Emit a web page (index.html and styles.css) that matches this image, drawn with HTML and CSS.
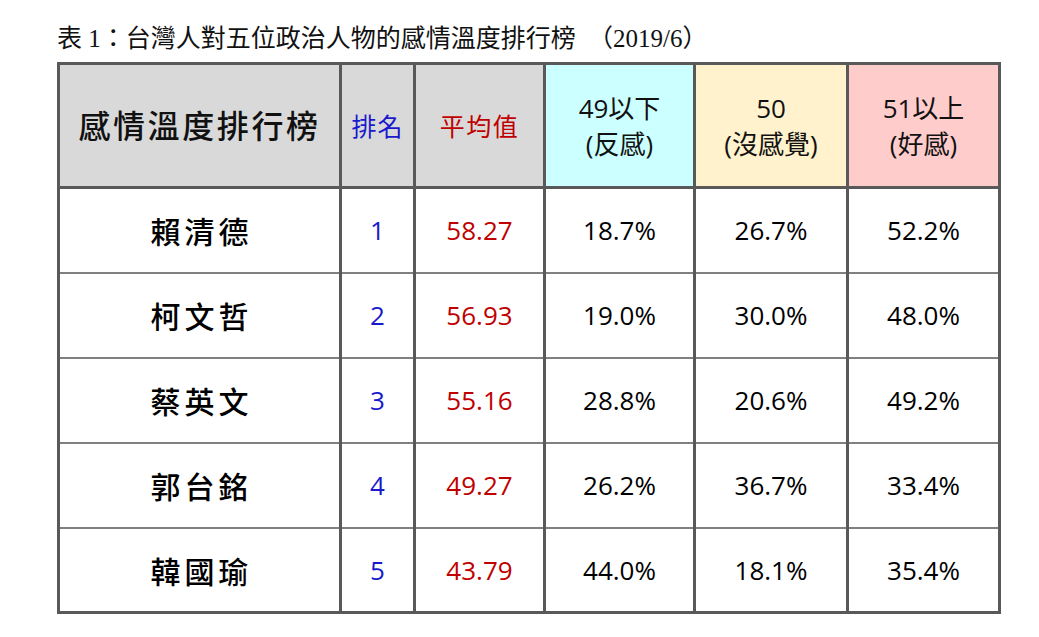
FILE: index.html
```html
<!DOCTYPE html>
<html lang="zh-Hant">
<head>
<meta charset="utf-8">
<title>表1</title>
<link rel="stylesheet" href="styles.css">
</head>
<body>
<div class="page">
  <div class="caption"><span class="lat">表</span> <span class="lat">1</span>：台灣人對五位政治人物的感情溫度排行榜 <span class="paren">（<span class="lat">2019/6</span>）</span></div>
  <table class="rank">
    <colgroup>
      <col class="c1"><col class="c2"><col class="c3"><col class="c4"><col class="c5"><col class="c6">
    </colgroup>
    <thead>
      <tr>
        <th class="h-gray h-title">感情溫度排行榜</th>
        <th class="h-gray h-rank">排名</th>
        <th class="h-gray h-avg">平均值</th>
        <th class="h-cyan">49以下<br>(反感)</th>
        <th class="h-yellow">50<br>(沒感覺)</th>
        <th class="h-pink">51以上<br>(好感)</th>
      </tr>
    </thead>
    <tbody>
      <tr><td class="name">賴清德</td><td class="rk">1</td><td class="avg">58.27</td><td>18.7%</td><td>26.7%</td><td>52.2%</td></tr>
      <tr><td class="name">柯文哲</td><td class="rk">2</td><td class="avg">56.93</td><td>19.0%</td><td>30.0%</td><td>48.0%</td></tr>
      <tr><td class="name">蔡英文</td><td class="rk">3</td><td class="avg">55.16</td><td>28.8%</td><td>20.6%</td><td>49.2%</td></tr>
      <tr><td class="name">郭台銘</td><td class="rk">4</td><td class="avg">49.27</td><td>26.2%</td><td>36.7%</td><td>33.4%</td></tr>
      <tr><td class="name">韓國瑜</td><td class="rk">5</td><td class="avg">43.79</td><td>44.0%</td><td>18.1%</td><td>35.4%</td></tr>
    </tbody>
  </table>
</div>
</body>
</html>
```

FILE: styles.css
```css
html, body {
  margin: 0;
  padding: 0;
  background: #ffffff;
}

.page {
  padding: 23px 0 0 57px;
}

.caption {
  font-family: "Liberation Serif", "Noto Sans CJK TC", serif;
  font-size: 25px;
  line-height: 32px;
  height: 39px;
  color: #111;
  white-space: nowrap;
}

.caption .lat {
  font-family: "Liberation Serif", "Noto Sans CJK TC", serif;
}

.caption .paren {
  margin-left: 6px;
}

.rank {
  border-collapse: collapse;
  table-layout: fixed;
  width: 944px;
  border: 3px solid #595959;
  font-family: "Open Sans", "Noto Sans CJK TC", sans-serif;
  color: #000;
}

.c1 { width: 282px; }
.c2 { width: 74px; }
.c3 { width: 130px; }
.c4 { width: 150px; }
.c5 { width: 153px; }
.c6 { width: 152px; }

.rank th,
.rank td {
  border-left: 3px solid #595959;
  border-right: 3px solid #595959;
  padding: 0;
  text-align: center;
  vertical-align: middle;
}

.rank thead tr {
  height: 124px;
}

.rank th {
  border-bottom: 3px solid #595959;
  font-weight: 400;
  font-size: 26px;
  line-height: 36px;
  color: #111;
}

.rank tbody tr {
  height: 85px;
}

.rank tbody tr + tr td {
  border-top: 2px solid #808080;
}

.rank td {
  font-size: 26px;
  font-weight: 500;
  background: #ffffff;
}

.h-gray { background: #d9d9d9; }
.h-cyan { background: #ccffff; }
.h-yellow { background: #fff2cc; }
.h-pink { background: #ffcccc; }

.rank th.h-title {
  font-size: 32px;
  letter-spacing: 2.6px;
  font-weight: 500;
}

.rank th.h-rank {
  color: #1a1acc;
  font-size: 25px;
  letter-spacing: 1px;
}

.rank th.h-avg {
  color: #c00000;
  font-size: 25px;
  letter-spacing: 1.5px;
}

.rank td.name {
  font-family: "Noto Sans CJK TC", sans-serif;
  font-size: 30px;
  font-weight: 500;
  letter-spacing: 4px;
  padding-left: 4px;
}

.rank td.rk {
  color: #1a1acc;
  font-weight: 400;
}

.rank td.avg {
  color: #c00000;
  font-weight: 400;
}
```
